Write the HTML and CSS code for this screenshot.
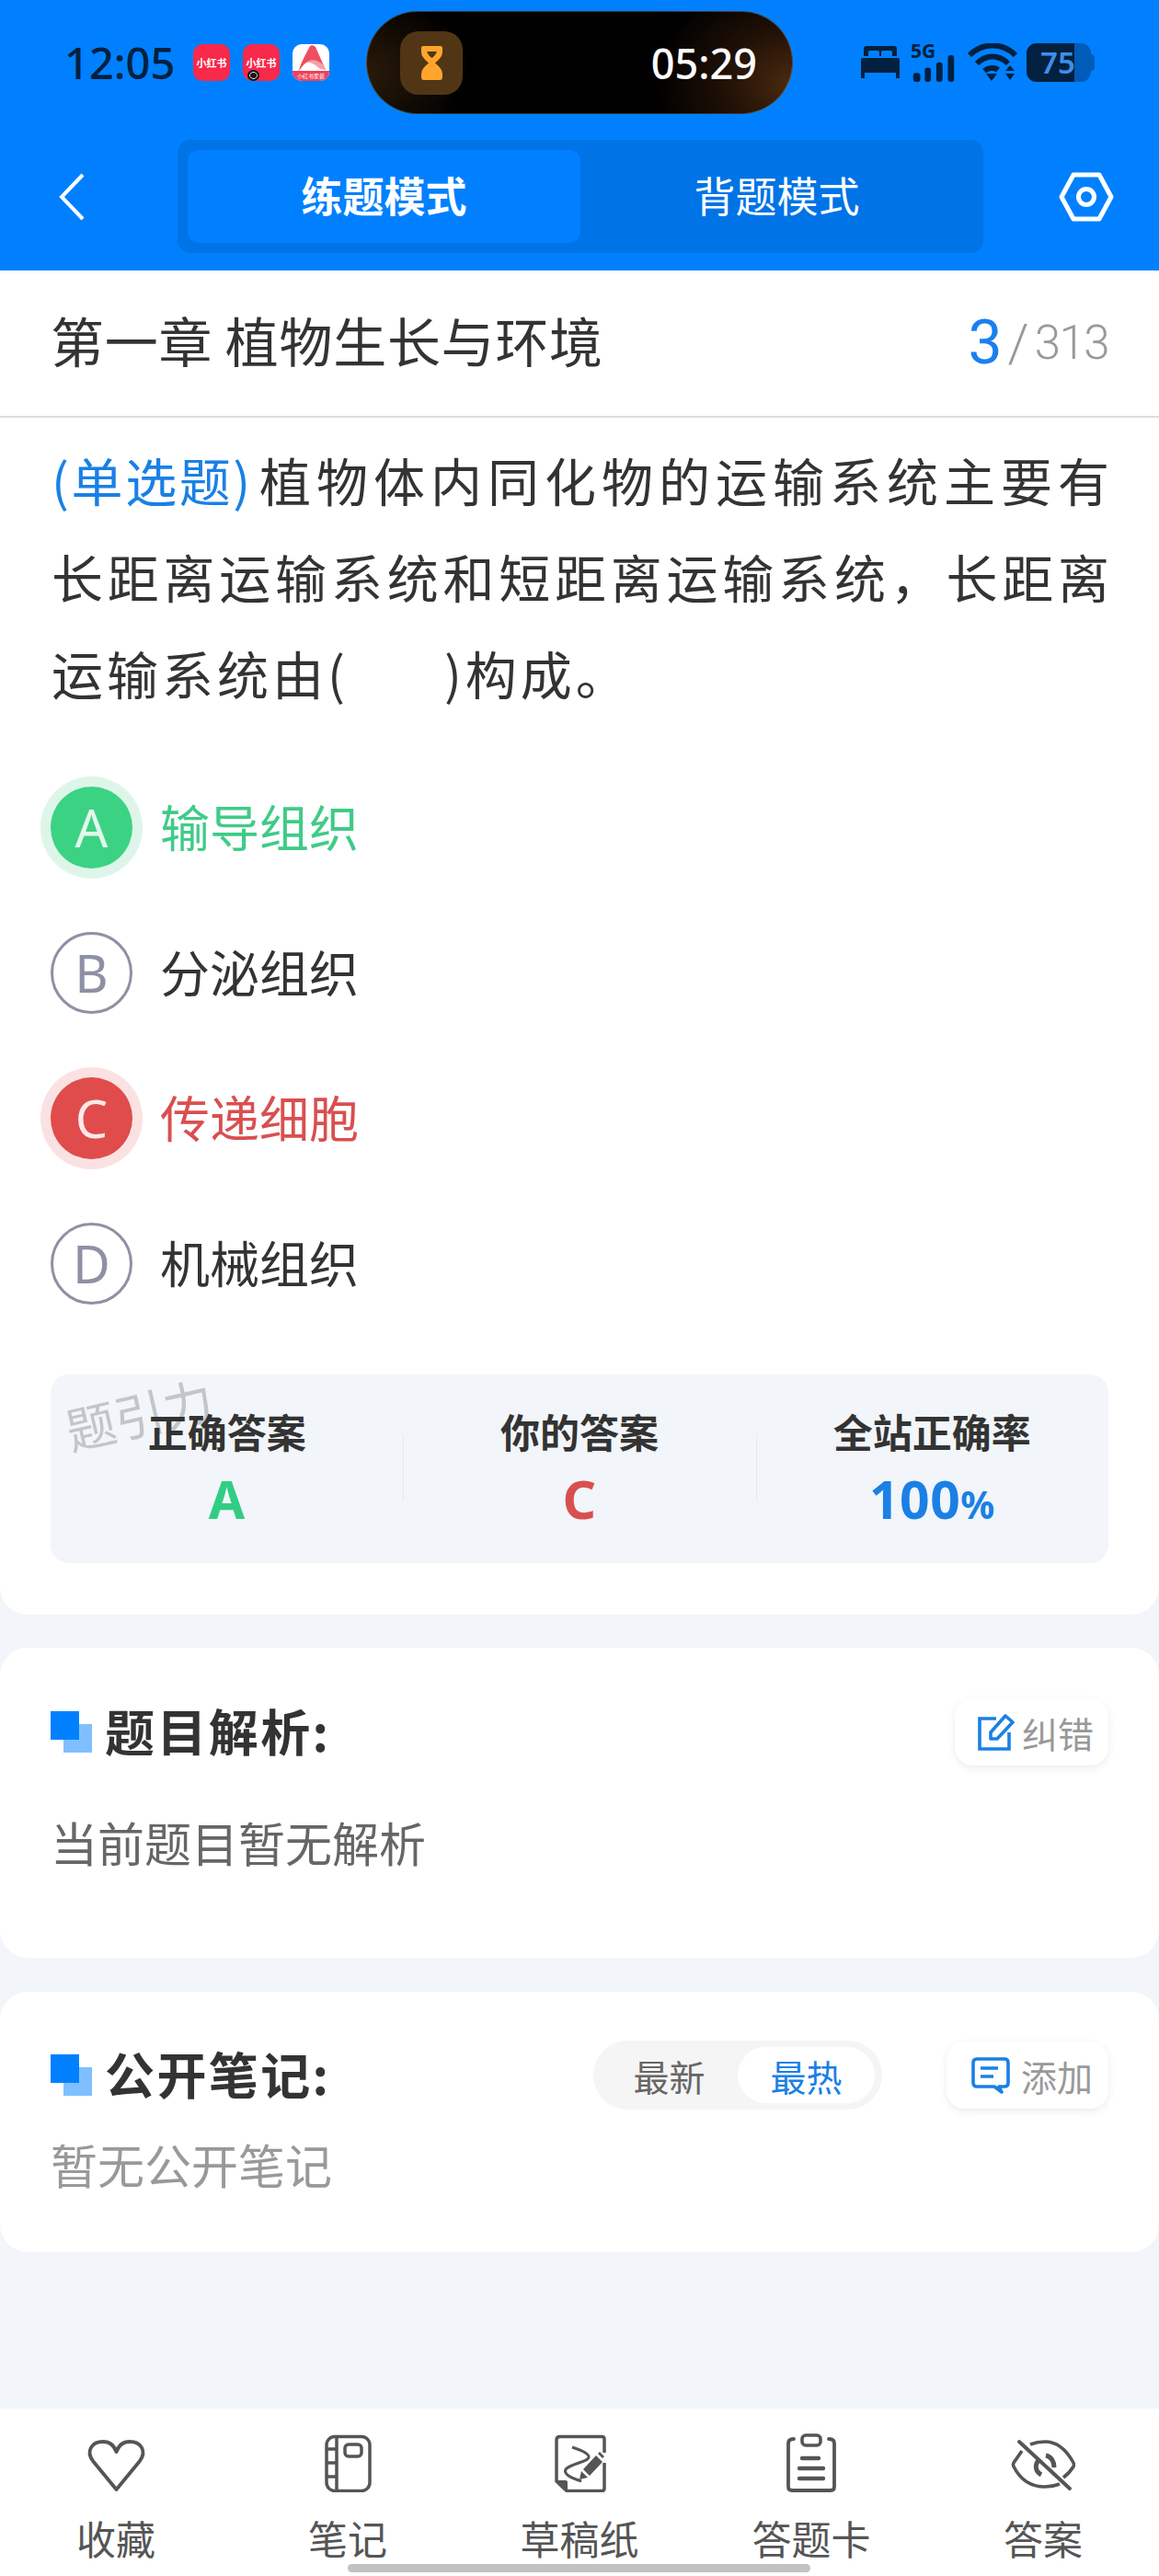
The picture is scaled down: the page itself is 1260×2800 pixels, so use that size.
FILE: index.html
```html
<!DOCTYPE html>
<html lang="zh-CN">
<head>
<meta charset="utf-8">
<title>第一章 植物生长与环境</title>
<link rel="stylesheet" href="styles.css">
</head>
<body>
<div class="page">
  <header class="top">
    <div class="status">
      <span class="clock">12:05</span>
      <div class="apps">
        <span class="app app-red">小红书</span>
        <span class="app app-red app-dot">小红书</span>
        <span class="app app-white">
          <svg class="app-a" viewBox="0 0 40 29"><path d="M19 2 Q22 0 25 3 L36 28 L29 26 C24 20 20 18 15 20 C12 22 10 25 7 29 C8 22 14 12 19 2 Z" fill="#ee4f5f"/><path d="M15 20 C19 16 26 16 33 22 L36 28 L29 26 C24 22 20 19 15 20 Z" fill="#f8a0a8"/></svg>
          <span class="app-band">小红书家装</span>
        </span>
      </div>
      <div class="island">
        <span class="island-icon">
          <svg class="hourglass" viewBox="0 0 25 37"><path d="M1 2 Q1 0 3 0 H22 Q24 0 24 2 V7 Q24 12 16 18.5 Q24 25 24 30 V34 Q24 37 21 37 H4 Q1 37 1 34 V30 Q1 25 9 18.5 Q1 12 1 7 Z M7 6 Q9 11 12.5 13 Q16 11 18 6 Z" fill="#ffa52e" fill-rule="evenodd"/></svg>
        </span>
        <span class="island-time">05:29</span>
      </div>
      <div class="sys">
        <svg class="bed" viewBox="0 0 42 35"><path d="M6 0 H36 Q39 0 39 3 V11 H34 V7 Q34 5 32 5 H24 Q22 5 22 7 V11 H20 V7 Q20 5 18 5 H10 Q8 5 8 7 V11 H3 V3 Q3 0 6 0 Z M2 13 H40 Q42 13 42 15 V35 H38 V29 H4 V35 H0 V15 Q0 13 2 13 Z" fill="#02203f"/></svg>
        <div class="signal">
          <span class="five-g">5G</span>
          <svg class="bars" viewBox="0 0 48 30"><rect x="1" y="20" width="8" height="10" rx="3"/><rect x="14" y="14" width="7" height="16" rx="3"/><rect x="27" y="8" width="7" height="22" rx="3"/><rect x="40" y="0" width="7" height="30" rx="3"/></svg>
        </div>
        <svg class="wifi" viewBox="0 0 54 42"><g fill="none" stroke="#02203f" stroke-width="6"><path d="M2 13 C16 -1 38 -1 52 13"/><path d="M10 22 C20 12 34 12 44 22"/><path d="M18 30 C23 26 29 26 33 29"/></g><path d="M20 33 H32 L26 41 Z" fill="#02203f"/><path d="M46 24 L51 30 H41 Z M41 33 H51 L46 40 Z" fill="#02203f"/></svg>
        <div class="battery">
          <div class="battery-body"><span class="battery-fill"></span><span class="battery-num">75</span></div>
          <span class="battery-tip"></span>
        </div>
      </div>
    </div>
    <nav class="nav">
      <svg class="back" viewBox="0 0 28 52"><path d="M26 2 L3 26 L26 50" fill="none" stroke="#fff" stroke-width="4"/></svg>
      <div class="tabs">
        <span class="tab tab-on">练题模式</span>
        <span class="tab">背题模式</span>
      </div>
      <svg class="hex" viewBox="0 0 60 54"><path d="M16 3 H44 L57 27 L44 51 H16 L3 27 Z" fill="none" stroke="#fff" stroke-width="5" stroke-linejoin="round"/><circle cx="30" cy="27" r="8.5" fill="none" stroke="#fff" stroke-width="5"/></svg>
    </nav>
  </header>

  <section class="card card-q">
    <div class="title-row">
      <h1 class="title">第一章 植物生长与环境</h1>
      <div class="count"><span class="count-now">3</span><span class="count-sep">/</span><span class="count-all">313</span></div>
    </div>
    <p class="question"><span class="q-type">(单选题)</span>植物体内同化物的运输系统主要有长距离运输系统和短距离运输系统，长距离运输系统由(<span class="blank"></span>)构成。</p>
    <ul class="options">
      <li class="option right"><span class="mark">A</span><span class="opt-text">输导组织</span></li>
      <li class="option"><span class="mark">B</span><span class="opt-text">分泌组织</span></li>
      <li class="option wrong"><span class="mark">C</span><span class="opt-text">传递细胞</span></li>
      <li class="option"><span class="mark">D</span><span class="opt-text">机械组织</span></li>
    </ul>
    <div class="answers">
      <span class="watermark">题引力</span>
      <div class="answer"><span class="answer-label">正确答案</span><span class="answer-value green">A</span></div>
      <div class="answer"><span class="answer-label">你的答案</span><span class="answer-value red">C</span></div>
      <div class="answer"><span class="answer-label">全站正确率</span><span class="answer-value blue">100<small>%</small></span></div>
    </div>
  </section>

  <section class="card card-a">
    <div class="head">
      <h2 class="head-title"><span class="squares"></span>题目解析:</h2>
      <button class="action action-fix">
        <svg class="action-icon" viewBox="0 0 40 40"><path d="M20 5 H2 V38 H34 V20" fill="none" stroke="#1a80e5" stroke-width="3.6"/><path d="M14 27 L14 20 L30 2 L38 9 L21 27 Z" fill="none" stroke="#1a80e5" stroke-width="3.6" stroke-linejoin="round"/></svg>纠错
      </button>
    </div>
    <p class="empty-a">当前题目暂无解析</p>
  </section>

  <section class="card card-n">
    <div class="head">
      <h2 class="head-title"><span class="squares"></span>公开笔记:</h2>
      <div class="seg"><span class="seg-item">最新</span><span class="seg-item seg-on">最热</span></div>
      <button class="action action-add">
        <svg class="action-icon add-icon" viewBox="0 0 42 40"><path d="M6 2 H36 Q40 2 40 6 V28 Q40 32 36 32 H30 L33 38 L25 32 H6 Q2 32 2 28 V6 Q2 2 6 2 Z" fill="none" stroke="#1a80e5" stroke-width="3.6" stroke-linejoin="round"/><path d="M10 12 H29 M10 21 H24" stroke="#1a80e5" stroke-width="3.6" fill="none"/></svg>添加
      </button>
    </div>
    <p class="empty-n">暂无公开笔记</p>
  </section>

  <footer class="bottom">
    <div class="tool">
      <svg class="tool-icon" viewBox="0 0 70 64"><path d="M35.5 61 L10 30 C2 19 9 9 21 9 C28 9 33 13 35.5 20 C38 13 43 9 50 9 C62 9 69 19 61 30 Z" fill="none" stroke="#555" stroke-width="3.8" stroke-linejoin="round"/></svg>
      <span>收藏</span>
    </div>
    <div class="tool">
      <svg class="tool-icon" viewBox="0 0 70 64"><rect x="12" y="3.5" width="47" height="59" rx="9" fill="none" stroke="#555" stroke-width="3.5"/><path d="M23 3.5 V62.5 M12 17 H23 M12 32 H23 M12 47 H23" stroke="#555" stroke-width="3.5" fill="none"/><rect x="32" y="12" width="18" height="13" rx="4" fill="none" stroke="#555" stroke-width="3.5"/></svg>
      <span>笔记</span>
    </div>
    <div class="tool">
      <svg class="tool-icon" viewBox="0 0 70 64"><path d="M62 21 V6 Q62 3.5 59 3.5 H14 Q10 3.5 10 7 V52 L21 62.5 H59 Q62 62.5 62 60 V32" fill="none" stroke="#555" stroke-width="3.5"/><path d="M10 51 H20 Q22 51 22 53 V62 Z" fill="#555"/><path d="M27 15 C36 18 46 22 45 26 C44 31 25 33 20 39 C17 45 28 49 37 52" fill="none" stroke="#555" stroke-width="3"/><path d="M53 24 L60 31 L46 46 L39 39 Z M37 41 L44 48 L35 50 Z M57 20 L62 25 L60 27 L55 22 Z" fill="#555"/></svg>
      <span>草稿纸</span>
    </div>
    <div class="tool">
      <svg class="tool-icon" viewBox="0 0 70 64"><path d="M16 6 Q10 6 10 11 V58 Q10 62 14 62 H56 Q60 62 60 58 V11 Q60 6 54 6" fill="none" stroke="#555" stroke-width="3.8" stroke-linecap="round"/><rect x="25" y="2" width="20" height="11" rx="4" fill="none" stroke="#555" stroke-width="3.6"/><path d="M25 27 H43 M22 38 H48 M22 49 H48" stroke="#555" stroke-width="4.4" stroke-linecap="round"/></svg>
      <span>答题卡</span>
    </div>
    <div class="tool">
      <svg class="tool-icon" viewBox="0 0 70 64"><path d="M12 19 L3 32 Q2 34 3 36 C10 50 22 58 37 58 C43 58 48 57 53 55 M21 12 C26 10 31 9 37 9 C51 9 61 19 68 32 Q69 34 68 36 C65 41 61 45 57 48" fill="none" stroke="#555" stroke-width="3.6"/><path d="M30 29 C26 34 26 41 33 45 M38 24 C44 25 47 31 47 37" fill="none" stroke="#555" stroke-width="5"/><path d="M9 9 L64 60" stroke="#555" stroke-width="4" stroke-linecap="round"/></svg>
      <span>答案</span>
    </div>
    <span class="home-bar"></span>
  </footer>
</div>
</body>
</html>
```
FILE: styles.css
```css
* { box-sizing: border-box; }
html, body { margin: 0; padding: 0; }
body { width: 1260px; height: 2800px; background: #f2f5f9; font-family: "Noto Sans CJK SC", "Noto Sans", sans-serif; color: #333; overflow: hidden; }
h1, h2, p, ul { margin: 0; padding: 0; font-weight: 400; }
ul { list-style: none; }
button { font: inherit; border: 0; background: #fff; }
.page { position: relative; width: 1260px; height: 2800px; display: flex; flex-direction: column; }

.top { height: 294px; background: #0080ff; flex: none; }
.status { height: 136px; padding: 12px 0 0 70px; display: flex; align-items: flex-start; }
.clock { font-family: "Noto Sans", sans-serif; font-size: 47px; font-weight: 500; line-height: 112px; color: #02203f; width: 119px; white-space: nowrap; }
.apps { display: flex; gap: 14px; margin: 36px 0 0 21px; }
.app { width: 40px; height: 40px; border-radius: 10px; font-size: 11px; line-height: 40px; text-align: center; color: #fff; font-weight: 700; white-space: nowrap; position: relative; }
.app-red { background: #f8294b; }
.app-dot::after { content: ""; position: absolute; left: 5px; top: 28px; width: 9px; height: 8px; border-radius: 50%; background: #111; border: 2px solid #111; box-shadow: inset 0 0 0 1px #fff; }
.app-white { background: #fff; display: flex; flex-direction: column; overflow: hidden; }
.app-a { width: 40px; height: 29px; display: block; }
.app-band { background: #f0405a; height: 11px; font-size: 6px; line-height: 11px; font-weight: 400; }
.island { width: 464px; height: 112px; margin-left: 40px; border-radius: 56px; background: radial-gradient(ellipse 150px 120px at 100% 70%, #4a2a10 0%, rgba(35,18,6,.9) 50%, rgba(0,0,0,0) 100%), radial-gradient(ellipse 110px 90px at 0% 60%, #2a1a0a, #000 100%); background-color: #000; border: 1px solid rgba(255,255,255,.2); display: flex; align-items: center; padding: 0 38px 0 36px; justify-content: space-between; }
.island-icon { width: 68px; height: 69px; border-radius: 20px; background: #503614; display: flex; align-items: center; justify-content: center; }
.hourglass { width: 25px; height: 37px; }
.island-time { font-family: "Noto Sans", sans-serif; font-size: 45px; color: #fff; font-weight: 500; }
.sys { display: flex; align-items: flex-start; margin-left: 74px; height: 112px; }
.bed { width: 42px; height: 35px; margin: 38px 0 0 0; }
.signal { position: relative; width: 48px; height: 42px; margin: 36px 0 0 13px; }
.five-g { position: absolute; left: -1px; top: -3px; font-family: "Noto Sans", sans-serif; font-size: 21px; font-weight: 700; line-height: 20px; color: #02203f; }
.bars { position: absolute; left: 0; top: 12px; width: 48px; height: 29px; fill: #02203f; }
.wifi { width: 54px; height: 42px; margin: 35px 0 0 13px; }
.battery { display: flex; align-items: center; margin: 35px 0 0 10px; }
.battery-body { position: relative; width: 70px; height: 42px; border-radius: 11px; background: #005cb8; }
.battery-fill { position: absolute; left: 0; top: 0; bottom: 0; width: 52px; border-radius: 11px 0 0 11px; background: #02203f; }
.battery-num { position: absolute; left: 15px; top: 0; font-family: "Noto Sans", sans-serif; font-size: 33px; font-weight: 600; line-height: 42px; color: #3d8fe8; }
.battery-tip { width: 4px; height: 18px; border-radius: 0 4px 4px 0; background: #005cb8; }

.nav { height: 158px; padding: 16px 50px 19px 64px; display: flex; align-items: center; }
.back { width: 28px; height: 52px; flex: none; }
.tabs { width: 876px; height: 123px; margin-left: 101px; padding: 11px; border-radius: 14px; background: #0073e6; display: flex; flex: none; }
.tab { flex: 1; display: flex; align-items: center; justify-content: center; border-radius: 12px; color: #fff; font-size: 45px; padding-bottom: 4px; }
.tab-on { background: #0080ff; font-weight: 700; }
.hex { width: 60px; height: 54px; margin-left: 82px; flex: none; }

.card { background: #fff; flex: none; border-radius: 0 0 30px 30px; }
.card-q { height: 1461px; }
.title-row { height: 160px; padding: 0 55px 9px 55px; border-bottom: 2px solid #dedede; display: flex; align-items: center; justify-content: space-between; }
.title { font-size: 58px; line-height: 60px; letter-spacing: .7px; color: #333; }
.count { display: flex; align-items: center; margin-top: 9px; font-family: Roboto, sans-serif; font-weight: 300; color: #999; line-height: 70px; }
.count-now { font-size: 66px; font-weight: 400; color: #1a80f0; }
.count-sep { font-size: 58px; margin: 0 6px 0 6px; }
.count-all { font-size: 51px; letter-spacing: -1.5px; }
.question { margin: 14px 50px 0 56px; font-size: 56px; line-height: 105px; letter-spacing: 4px; color: #333; text-align: justify; }
.q-type { color: #1a80e5; letter-spacing: .6px; margin-right: 7px; }
.blank { display: inline-block; width: 104px; }
.options { margin: 71px 0 0 55px; display: flex; flex-direction: column; gap: 68px; }
.option { height: 90px; display: flex; align-items: center; gap: 30px; font-size: 54px; color: #333; }
.opt-text { padding-bottom: 4px; }
.mark { width: 89px; height: 89px; border-radius: 50%; border: 3px solid #8e91a3; color: #8e91a3; font-family: "Noto Sans", sans-serif; font-size: 56px; font-weight: 400; display: flex; align-items: center; justify-content: center; flex: none; }
.right { color: #3fcb87; }
.right .mark { background: #3bd383; border: 0; color: #e3f8ec; box-shadow: 0 0 0 11px #def6e9; }
.wrong { color: #d94f50; }
.wrong .mark { background: #e04c4c; border: 0; color: #fbe9e9; box-shadow: 0 0 0 11px #fbe2e2; }
.answers { position: relative; margin: 76px 55px 0; height: 205px; border-radius: 20px; background: #f2f5f9; display: grid; grid-template-columns: repeat(3, 1fr); }
.watermark { position: absolute; left: 15px; top: 12px; font-size: 54px; line-height: 60px; color: #c2c5c9; transform: rotate(-13deg); white-space: nowrap; }
.answer { position: relative; display: flex; flex-direction: column; align-items: center; padding-top: 30px; }
.answer + .answer::before { content: ""; position: absolute; left: 0; top: 65px; height: 73px; width: 1px; background: #e6e9ed; }
.answer-label { font-size: 43px; line-height: 62px; font-weight: 700; color: #333; position: relative; }
.answer-value { margin-top: 5px; font-family: "Noto Sans", sans-serif; font-size: 57px; line-height: 76px; font-weight: 700; letter-spacing: .5px; }
.answer-value small { font-size: 41px; }
.green { color: #32cd85; }
.red { color: #d94f50; }
.blue { color: #1a80e5; }

.card-a { margin-top: 36px; height: 337px; border-radius: 30px; padding: 55px 55px 0; }
.card-n { margin-top: 37px; height: 283px; border-radius: 30px; padding: 54px 55px 0; }
.head { display: flex; align-items: center; height: 73px; }
.head-title { display: flex; align-items: center; font-size: 54px; font-weight: 700; color: #333; letter-spacing: 2.4px; padding-bottom: 4px; margin-right: auto; }
.squares { width: 45px; height: 45px; margin: 4px 14px 0 0; background: linear-gradient(#0080ff,#0080ff) 0 0 / 31px 31px no-repeat, linear-gradient(#80bfff,#80bfff) 14px 14px / 31px 31px no-repeat; }
.action { height: 73px; display: flex; align-items: center; border-radius: 20px; background: #fff; box-shadow: 0 3px 10px rgba(0,0,0,.08); color: #999; font-size: 39px; padding: 0 0 0 25px; gap: 8px; }
.action-fix { width: 167px; }
.action-icon { width: 40px; height: 40px; flex: none; }
.add-icon { width: 42px; }
.action-add { width: 176px; margin-left: 70px; padding-left: 27px; gap: 12px; }
.empty-a { margin-top: 53px; font-size: 51px; line-height: 60px; color: #666; }
.seg { width: 314px; height: 75px; border-radius: 38px; background: #f5f5f5; display: flex; align-items: center; padding: 7px 8px; }
.seg-item { flex: none; width: 149px; height: 61px; display: flex; align-items: center; justify-content: center; border-radius: 31px; font-size: 39px; color: #666; }
.seg-on { background: #fff; color: #1a80e5; }
.empty-n { margin-top: 30px; font-size: 51px; line-height: 60px; color: #999; }

.bottom { position: absolute; left: 0; right: 0; bottom: 0; height: 183px; background: #fff; display: grid; grid-template-columns: repeat(5, 1fr); border-top: 1px solid #f4f4f4; }
.tool { display: flex; flex-direction: column; align-items: center; padding-top: 27px; color: #555; font-size: 43px; line-height: 60px; }
.tool-icon { width: 70px; height: 64px; margin-bottom: 19px; }
.home-bar { position: absolute; left: 378px; top: 169px; width: 503px; height: 9px; border-radius: 5px; background: #c2c2c2; }
```
